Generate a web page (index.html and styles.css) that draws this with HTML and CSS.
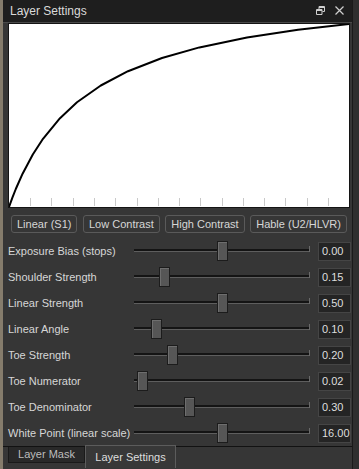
FILE: index.html
```html
<!DOCTYPE html>
<html lang="en">
<head>
    <meta charset="UTF-8">
    <meta name="viewport" content="width=device-width, initial-scale=1.0">
    <title>Layer Settings</title>
    <link rel="stylesheet" href="styles.css">
</head>
<body>
    <div class="frame">
        <div class="edge"></div>

        <div class="dock">
            <div class="titlebar">
                <span class="title">Layer Settings</span>
                <div class="title-icons">
                    <!-- float -->
                    <svg width="9" height="9" viewBox="0 0 9 9">
                        <path d="M3 .5h5.5v5H6.5M.5 3.5h5.5v5H.5z M3 .5v3" fill="none" stroke="#cfcfcf" stroke-width="1"/>
                        <path d="M3 1.5h5.5M.5 4.5h5.5" stroke="#cfcfcf" stroke-width="1"/>
                    </svg>
                    <!-- close -->
                    <svg width="9" height="9" viewBox="0 0 9 9">
                        <path d="M.5 .5l8 8M8.5 .5l-8 8" stroke="#cfcfcf" stroke-width="1.2"/>
                    </svg>
                </div>
            </div>

            <div class="panel">
                <div class="curve">
                    <svg width="340" height="183" viewBox="0 0 340 183">
                        <g stroke="#c9c9c9" stroke-width="1">
                            <line x1="21.5" y1="174" x2="21.5" y2="182"/>
                            <line x1="42.5" y1="174" x2="42.5" y2="182"/>
                            <line x1="64.5" y1="174" x2="64.5" y2="182"/>
                            <line x1="85.5" y1="174" x2="85.5" y2="182"/>
                            <line x1="106.5" y1="174" x2="106.5" y2="182"/>
                            <line x1="128.5" y1="174" x2="128.5" y2="182"/>
                            <line x1="149.5" y1="174" x2="149.5" y2="182"/>
                            <line x1="170.5" y1="174" x2="170.5" y2="182"/>
                            <line x1="191.5" y1="174" x2="191.5" y2="182"/>
                            <line x1="213.5" y1="174" x2="213.5" y2="182"/>
                            <line x1="234.5" y1="174" x2="234.5" y2="182"/>
                            <line x1="255.5" y1="174" x2="255.5" y2="182"/>
                            <line x1="276.5" y1="174" x2="276.5" y2="182"/>
                            <line x1="298.5" y1="174" x2="298.5" y2="182"/>
                            <line x1="319.5" y1="174" x2="319.5" y2="182"/>
                        </g>
                        <polyline fill="none" stroke="#000" stroke-width="2" stroke-linejoin="round"
                            points="0,183 3.4,173.6 6.8,165 13.6,149.7 23.8,130.5 34,114.8 51,94.2 68,78.3 91.8,61.5 119,47.2 153,34 190.4,23.4 238,13.6 289,5.8 340,0"/>
                    </svg>
                </div>

                <div class="presets">
                    <button class="preset">Linear (S1)</button>
                    <button class="preset">Low Contrast</button>
                    <button class="preset">High Contrast</button>
                    <button class="preset">Hable (U2/HLVR)</button>
                </div>

                <div class="params">
                    <div class="param">
                        <span class="label">Exposure Bias (stops)</span>
                        <div class="slider"><div class="groove"></div><div class="handle" style="--p: 0.5"></div></div>
                        <div class="value">0.00</div>
                    </div>
                    <div class="param">
                        <span class="label">Shoulder Strength</span>
                        <div class="slider"><div class="groove"></div><div class="handle" style="--p: 0.15"></div></div>
                        <div class="value">0.15</div>
                    </div>
                    <div class="param">
                        <span class="label">Linear Strength</span>
                        <div class="slider"><div class="groove"></div><div class="handle" style="--p: 0.5"></div></div>
                        <div class="value">0.50</div>
                    </div>
                    <div class="param">
                        <span class="label">Linear Angle</span>
                        <div class="slider"><div class="groove"></div><div class="handle" style="--p: 0.1"></div></div>
                        <div class="value">0.10</div>
                    </div>
                    <div class="param">
                        <span class="label">Toe Strength</span>
                        <div class="slider"><div class="groove"></div><div class="handle" style="--p: 0.2"></div></div>
                        <div class="value">0.20</div>
                    </div>
                    <div class="param">
                        <span class="label">Toe Numerator</span>
                        <div class="slider"><div class="groove"></div><div class="handle" style="--p: 0.02"></div></div>
                        <div class="value">0.02</div>
                    </div>
                    <div class="param">
                        <span class="label">Toe Denominator</span>
                        <div class="slider"><div class="groove"></div><div class="handle" style="--p: 0.3"></div></div>
                        <div class="value">0.30</div>
                    </div>
                    <div class="param">
                        <span class="label">White Point (linear scale)</span>
                        <div class="slider"><div class="groove"></div><div class="handle" style="--p: 0.5"></div></div>
                        <div class="value">16.00</div>
                    </div>
                </div>
            </div>

            <div class="tabs">
                <div class="tab">Layer Mask</div>
                <div class="tab active">Layer Settings</div>
            </div>
        </div>

        <div class="edge-right"></div>
    </div>
</body>
</html>
```

FILE: styles.css
```css
* {
    margin: 0;
    padding: 0;
    box-sizing: border-box;
}

body {
    font-family: "Liberation Sans", Arial, sans-serif;
    font-size: 11px;
    background: #2e2e2e;
    color: #d6d6d6;
    width: 359px;
    height: 469px;
    overflow: hidden;
}

.frame {
    display: flex;
    height: 469px;
}

.edge {
    width: 3px;
    background: #857c6c;
}

.dock {
    width: 350px;
    display: flex;
    flex-direction: column;
    background: #363636;
    border-right: 1px solid #1a1a1a;
}

.edge-right {
    flex: 1;
    background: #2f2f2f;
}

/* title bar */
.titlebar {
    height: 23px;
    display: flex;
    align-items: center;
    justify-content: space-between;
    padding: 0 8px 1px 7px;
    background: #1e1e1e;
    border-bottom: 1px solid #4a4a4a;
}

.title {
    font-size: 12px;
    color: #dadada;
}

.title-icons {
    display: flex;
    gap: 10px;
    align-items: center;
}

/* panel */
.panel {
    padding-left: 5px;
    flex: 1;
}

.curve {
    width: 342px;
    height: 185px;
    border: 1px solid #141414;
    background: #fff;
}

.curve svg {
    display: block;
}

.presets {
    display: flex;
    justify-content: space-between;
    margin: 7px 0 0 3px;
    width: 336px;
}

.preset {
    height: 18px;
    padding: 0 5px;
    font-family: inherit;
    font-size: 11px;
    color: #d6d6d6;
    background: #363636;
    border: 1px solid #5a5a5a;
    border-radius: 3px;
}

.params {
    margin-top: 5px;
}

.param {
    height: 26px;
    display: grid;
    grid-template-columns: 126px 176px 41px;
    align-items: center;
}

.label {
    white-space: nowrap;
}

.slider {
    position: relative;
    height: 20px;
}

.groove {
    position: absolute;
    left: 0;
    right: 0;
    top: 8px;
    height: 3px;
    border-top: 2px solid #141414;
    border-bottom: 1px solid #5e5e5e;
}

.groove::after {
    content: "";
    position: absolute;
    right: 0;
    top: -5px;
    width: 1px;
    height: 6px;
    background: #6a6a6a;
}

.handle {
    position: absolute;
    top: 0;
    left: calc(var(--p) * (100% - 11px));
    width: 11px;
    height: 20px;
    background: #565656;
    border: 1px solid #1c1c1c;
    box-shadow: inset 1px 1px 0 #6e6e6e;
}

.value {
    margin-left: 8px;
    height: 19px;
    line-height: 17px;
    padding-left: 3px;
    background: #242424;
    border: 1px solid #454545;
    color: #dedede;
}

/* bottom tabs */
.tabs {
    height: 23px;
    display: flex;
    align-items: flex-start;
    padding-left: 5px;
    border-top: 1px solid #121212;
}

.tab {
    width: 77px;
    height: 16px;
    line-height: 14px;
    text-align: center;
    color: #bdbdbd;
    background: #292929;
    border: 1px solid #1a1a1a;
    border-top: none;
}

.tab.active {
    width: 91px;
    height: 23px;
    margin-top: -2px;
    line-height: 22px;
    color: #dedede;
    background: #383838;
    border: 1px solid #5c5c5c;
    border-bottom: none;
}
```
